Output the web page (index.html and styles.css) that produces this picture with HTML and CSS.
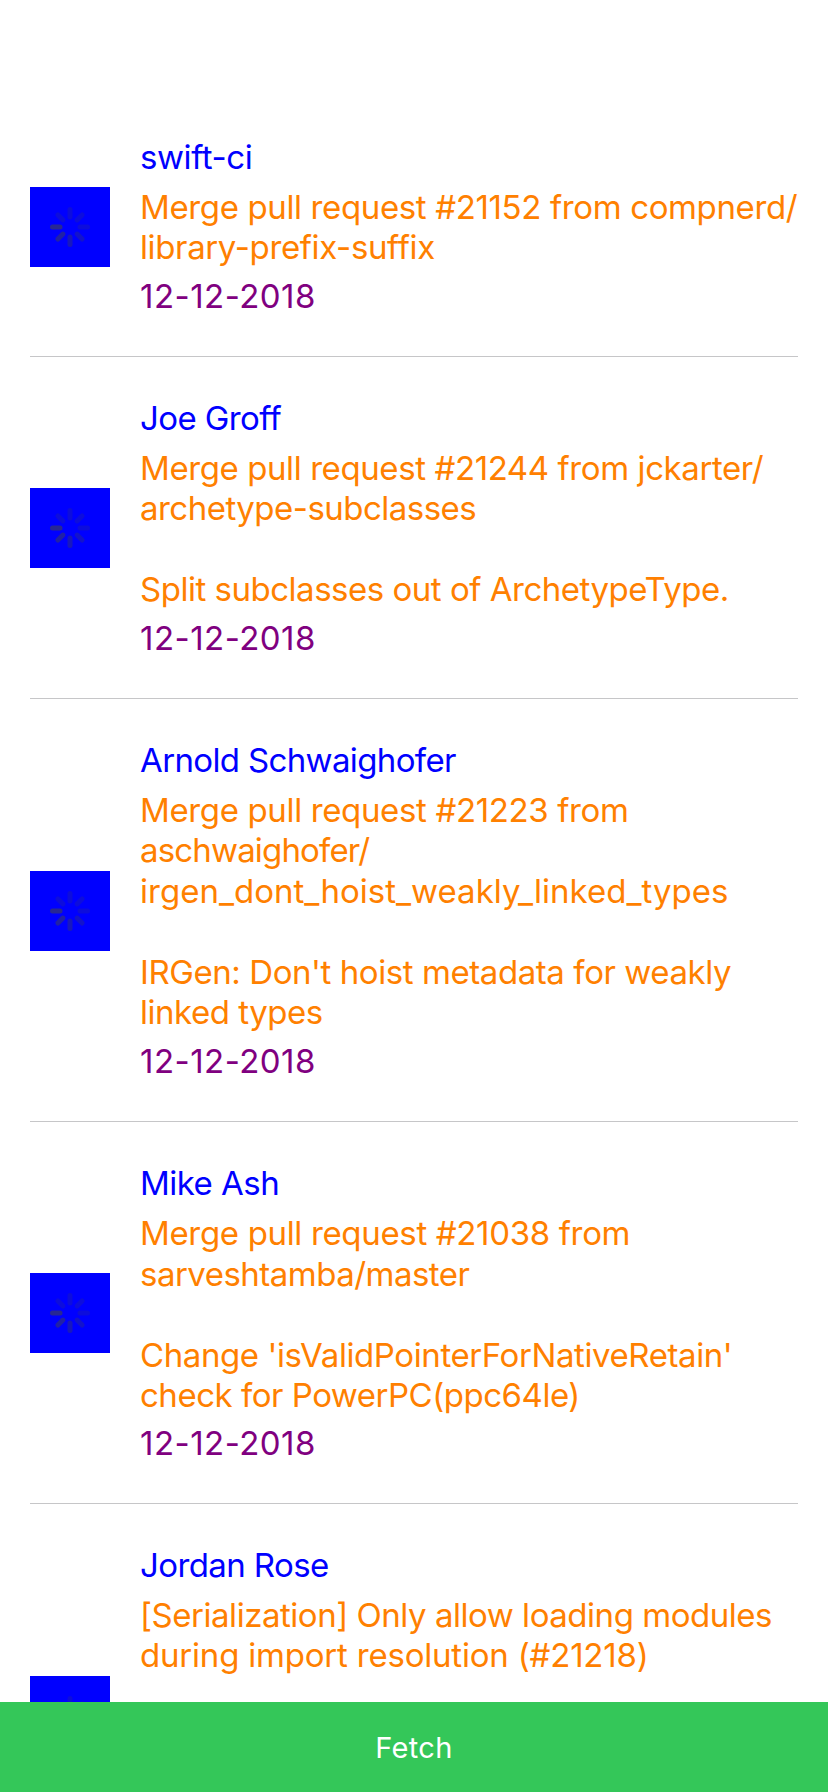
FILE: index.html
```html
<!DOCTYPE html>
<html lang="en">
<head>
<meta charset="utf-8">
<title>Commits</title>
<link rel="stylesheet" href="styles.css">
</head>
<body>
<svg class="defs" aria-hidden="true">
  <symbol id="spinner" viewBox="-20 -20 40 40">
    <g stroke-width="5" stroke-linecap="round" stroke="#47473f">
      <path d="M-10-0H-17.5" stroke-opacity=".56"/>
      <path d="M-7.1 7.1L-12.1 12.1" stroke-opacity=".47"/>
      <path d="M0 10V17.5" stroke-opacity=".34"/>
      <path d="M7.1 7.1L12.1 12.1" stroke-opacity=".27"/>
      <path d="M10 0H17.5" stroke-opacity=".18"/>
      <path d="M7.1-7.1L12.1-12.1" stroke-opacity=".18"/>
      <path d="M0-10V-17.5" stroke-opacity=".18"/>
      <path d="M-7.1-7.1L-12.1-12.1" stroke-opacity=".18"/>
    </g>
  </symbol>
</svg>
<div class="screen">
  <main class="list">
    <article class="row row-2">
      <div class="avatar"><svg class="spinner"><use href="#spinner"/></svg></div>
      <div class="info">
        <div class="author ls-43">swift-ci</div>
        <div class="message">
          <div class="line ls-37">Merge pull request #21152 from compnerd/</div>
          <div class="line ls-37">library-prefix-suffix</div>
        </div>
        <div class="date">12-12-2018</div>
      </div>
    </article>
    <article class="row row-4">
      <div class="avatar"><svg class="spinner"><use href="#spinner"/></svg></div>
      <div class="info">
        <div class="author ls-60">Joe Groff</div>
        <div class="message">
          <div class="line ls-41">Merge pull request #21244 from jckarter/</div>
          <div class="line ls-52">archetype-subclasses</div>
          <div class="line"></div>
          <div class="line ls-49">Split subclasses out of ArchetypeType.</div>
        </div>
        <div class="date">12-12-2018</div>
      </div>
    </article>
    <article class="row row-6">
      <div class="avatar"><svg class="spinner"><use href="#spinner"/></svg></div>
      <div class="info">
        <div class="author ls-64">Arnold Schwaighofer</div>
        <div class="message">
          <div class="line ls-36">Merge pull request #21223 from</div>
          <div class="line ls-83">aschwaighofer/</div>
          <div class="line ls-0">irgen_dont_hoist_weakly_linked_types</div>
          <div class="line"></div>
          <div class="line ls-43">IRGen: Don't hoist metadata for weakly</div>
          <div class="line ls-49">linked types</div>
        </div>
        <div class="date">12-12-2018</div>
      </div>
    </article>
    <article class="row row-5">
      <div class="avatar"><svg class="spinner"><use href="#spinner"/></svg></div>
      <div class="info">
        <div class="author ls-52">Mike Ash</div>
        <div class="message">
          <div class="line ls-34">Merge pull request #21038 from</div>
          <div class="line ls-52">sarveshtamba/master</div>
          <div class="line"></div>
          <div class="line ls-41">Change 'isValidPointerForNativeRetain'</div>
          <div class="line ls-49">check for PowerPC(ppc64le)</div>
        </div>
        <div class="date">12-12-2018</div>
      </div>
    </article>
    <article class="row row-last">
      <div class="avatar"><svg class="spinner"><use href="#spinner"/></svg></div>
      <div class="info">
        <div class="author ls-60">Jordan Rose</div>
        <div class="message">
          <div class="line ls-47">[Serialization] Only allow loading modules</div>
          <div class="line ls-20">during import resolution (#21218)</div>
        </div>
      </div>
    </article>
  </main>
  <button class="fetch" type="button">Fetch</button>
</div>
</body>
</html>
```

FILE: styles.css
```css
* { box-sizing: border-box; }

body {
  margin: 0;
  background: #fff;
  font-family: Inter, "Liberation Sans", sans-serif;
}

.defs { display: none; }

.screen {
  display: flex;
  flex-direction: column;
  height: 1792px;
  overflow: hidden;
}

.list {
  flex: 1;
  min-height: 0;
  padding: 96px 30px 0;
  overflow: hidden;
}

.row {
  display: flex;
  gap: 30px;
  padding-top: 40.75px;
  padding-bottom: 39.25px;
  border-bottom: 1px solid #c6c6c8;
}

.row-last {
  height: 422.5px;
  border-bottom: 0;
}

.avatar {
  display: flex;
  flex: none;
  align-items: center;
  justify-content: center;
  align-self: center;
  width: 80px;
  height: 80px;
  background: #00f;
}

.spinner {
  display: block;
  width: 40px;
  height: 40px;
}

.info {
  flex: 1;
  min-width: 0;
  font-size: 33px;
  line-height: 40.5px;
  white-space: nowrap;
}

.author {
  margin-bottom: 9.4px;
  color: #00f;
}

.message { color: #ff8000; }

.line { height: 40.5px; }

.date {
  margin-top: 8.2px;
  color: #800080;
  letter-spacing: .477px;
}

/* Row heights by number of message lines */
.row-2 { height: 261px; }
.row-4 { height: 342px; }
.row-5 { height: 382px; }
.row-6 { height: 423px; }
.row-5 .message { padding-top: .5px; }
.row-5 .date { margin-top: 7.5px; }

.fetch {
  flex: none;
  height: 90px;
  padding: 2px 0 0;
  border: 0;
  background: #34c759;
  color: #fff;
  font: 29px/36px Inter, "Liberation Sans", sans-serif;
  letter-spacing: .35px;
}

/* Tracking steps, in hundredths of a pixel */
.ls-0 { letter-spacing: .013px; }
.ls-20 { letter-spacing: -.203px; }
.ls-34 { letter-spacing: -.34px; }
.ls-36 { letter-spacing: -.361px; }
.ls-37 { letter-spacing: -.37px; }
.ls-41 { letter-spacing: -.41px; }
.ls-43 { letter-spacing: -.426px; }
.ls-47 { letter-spacing: -.468px; }
.ls-49 { letter-spacing: -.485px; }
.ls-52 { letter-spacing: -.52px; }
.ls-60 { letter-spacing: -.597px; }
.ls-64 { letter-spacing: -.642px; }
.ls-83 { letter-spacing: -.837px; }
```
